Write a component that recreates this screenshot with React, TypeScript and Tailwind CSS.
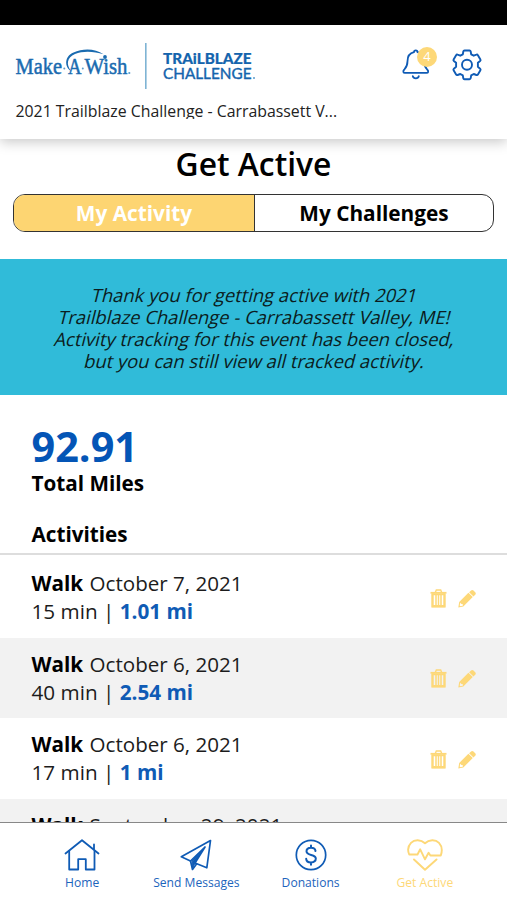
import type { ReactNode } from 'react'
import clsx from 'clsx'

interface Activity {
    type: string
    date: string
    minutes: number
    miles: string
}

const activities: Activity[] = [
    { type: 'Walk', date: 'October 7, 2021', minutes: 15, miles: '1.01 mi' },
    { type: 'Walk', date: 'October 6, 2021', minutes: 40, miles: '2.54 mi' },
    { type: 'Walk', date: 'October 6, 2021', minutes: 17, miles: '1 mi' },
    { type: 'Walk', date: 'September 29, 2021', minutes: 32, miles: '2.02 mi' },
]

const notice = [
    'Thank you for getting active with 2021',
    'Trailblaze Challenge - Carrabassett Valley, ME!',
    'Activity tracking for this event has been closed,',
    'but you can still view all tracked activity.',
]

function Logo() {
    return (
        <svg width="242" height="48" viewBox="0 0 242 48" className="block">
            <g fill="#1a6bb0" fontFamily="'Liberation Serif', serif" fontSize="22.5" stroke="#1a6bb0" strokeWidth=".5">
                <text x="0.500" y="32" textLength="46.500" lengthAdjust="spacingAndGlyphs">Make</text>
                <text x="53" y="32" textLength="13.500" lengthAdjust="spacingAndGlyphs">A</text>
                <text x="69.500" y="32" textLength="43" lengthAdjust="spacingAndGlyphs">Wish</text>
            </g>
            <circle cx="49.3" cy="26.5" r="1" fill="#5c9ccc" />
            <circle cx="67.8" cy="26.5" r="1" fill="#5c9ccc" />
            <circle cx="114.3" cy="31" r="1.100" fill="#5c9ccc" />
            {/* wish arc */}
            <path d="M56 29C49.500 25 49 14.500 58.500 10.500c9.500-4.300 22-4 30 1.800C79 9.300 68 8.800 60 12 51.800 15.500 51 22.500 56 29z" fill="#1a6bb0" />
            <circle cx="90" cy="15" r="1.900" fill="#1a6bb0" />
            <rect x="130" y="1" width="1.600" height="46" fill="#7fb4d4" />
            <g fill="#1464ad" stroke="#1464ad" fontFamily="Lato, sans-serif">
                <text x="148" y="22" fontSize="15.800" fontWeight="900" strokeWidth=".2" textLength="88.500" lengthAdjust="spacingAndGlyphs">TRAiLBLAZE</text>
                <text x="148" y="37" fontSize="16" strokeWidth=".4" textLength="88.500" lengthAdjust="spacingAndGlyphs">CHALLENGE</text>
            </g>
            <circle cx="239" cy="36" r="1" fill="#5c9ccc" />
        </svg>
    )
}

function BellIcon() {
    return (
        <svg width="28" height="32" viewBox="0 0 28 32" fill="none" stroke="#0f5bb5" strokeWidth="1.8" strokeLinecap="round" strokeLinejoin="round">
            <path d="M12 3.200C12 .8 15.500.8 15.500 3.200c4.500 1 6.500 4.500 6.500 9 0 5 1.500 6.500 3.300 8.500 1.500 1.800 1 3.100-.8 3.100H3c-1.800 0-2.300-1.300-.8-3.100 1.800-2 3.300-3.500 3.300-8.500 0-4.500 2-8 6.500-9z" />
            <path d="M10.800 27.200c.8 2.800 5.200 2.800 6 0" />
        </svg>
    )
}

function GearIcon() {
    return (
        <svg width="32" height="32" viewBox="0 0 32 32" fill="none" stroke="#0f5bb5" strokeWidth="1.900" strokeLinejoin="round">
            <path d="M13.500 1.500h5q1 0 1.200 1l.5 2.800 2.500 1.400 2.700-1q1-.4 1.500.5l2.500 4.200q.5.900-.3 1.600l-2.200 1.800v4l2.200 1.900q.8.700.3 1.600l-2.500 4.200q-.5.900-1.500.5l-2.700-1-2.500 1.400-.5 2.800q-.2 1-1.200 1h-5q-1 0-1.200-1l-.5-2.800-2.500-1.400-2.700 1q-1 .4-1.500-.5l-2.500-4.200q-.5-.9.3-1.600l2.200-1.900v-4l-2.200-1.800q-.8-.7-.3-1.600l2.500-4.200q.5-.9 1.500-.5l2.700 1 2.500-1.400.5-2.800q.2-1 1.200-1z" />
            <circle cx="16" cy="15.800" r="5" />
        </svg>
    )
}

function TrashIcon() {
    return (
        <svg width="17" height="19" viewBox="0 0 17 19" fill="none" stroke="#fdd878">
            <path d="M.5 3.800h16" strokeWidth="1.800" />
            <path d="M5.300 3.500 6.300 1h4.400l1 2.500" strokeWidth="1.400" />
            <path d="M2.500 4.500v12.800h12V4.500" strokeWidth="2.400" />
            <path d="M6 5v12M8.500 5v12M11 5v12" strokeWidth="1.500" />
            <path d="M2 17.300h13M2 5.200h13" strokeWidth="2" />
        </svg>
    )
}

function PencilIcon() {
    return (
        <svg width="18" height="19" viewBox="0 0 18 19" fill="#fdd878">
            <path d="M12.800 1.700c1-1 1.900-.9 2.700-.1l1.700 1.700c.8.8.8 1.700 0 2.500l-1.700 1.700-4.400-4.300z" />
            <path fillRule="evenodd" d="M10.400 3.800 14.800 8.100 5.300 17.500.3 18.500l.9-5.500zM2.300 13.800l-.6 2.600.9.800 2.400-.6-.2-1.400-1.400-.1z" />
        </svg>
    )
}

function HomeIcon() {
    return (
        <svg width="36" height="32" viewBox="0 0 36 32" fill="none" stroke="#0f5bb5" strokeWidth="1.800" strokeLinecap="round" strokeLinejoin="round">
            <path d="M1.500 14.500 18 1.200l16.500 13.300M30 10.500V5.500" />
            <path d="M5.200 12v18.500h9V20.200h7.600v10.300h8.700V12" />
        </svg>
    )
}

function PlaneIcon() {
    return (
        <svg width="32" height="32" viewBox="0 0 32 32" fill="none" stroke="#0f5bb5" strokeWidth="1.700" strokeLinecap="round" strokeLinejoin="round">
            <path d="M30.500 1.500 1.300 17.800l9.200 4.200L25 8 15 24l11.800 4.800z" />
            <path d="M10.500 22 12.500 30.500 16.500 25" />
            <path d="M12 22.500 12.700 29l2.300-5L21 13z" fill="#0f5bb5" strokeWidth="1" />
        </svg>
    )
}

function DollarIcon() {
    return (
        <svg width="32" height="32" viewBox="0 0 32 32" fill="none" stroke="#0f5bb5" strokeWidth="1.700" strokeLinecap="round">
            <circle cx="16" cy="16" r="14.700" />
            <path d="M20.500 12c-.3-2.200-2.200-3.200-4.500-3.200s-4.500 1.200-4.500 3.500c0 5 9.300 2.300 9.300 7.300 0 2.500-2.200 3.800-4.800 3.800s-4.600-1.200-4.800-3.600M16 6.500v2.300M16 23.500v2.300" strokeWidth="2" />
        </svg>
    )
}

function HeartPulseIcon() {
    return (
        <svg width="36" height="32" viewBox="0 0 36 32" fill="none" stroke="#fdd878" strokeWidth="1.900" strokeLinecap="round" strokeLinejoin="round">
            <path d="M18 4.200C14 .3 7.500.2 4 3.800 1 7 .5 11.500 2.200 15.500h8.300l2.700-5.200 4.800 10 3.600-6.500 1.800 2.700h10.400C35.500 11.500 35 7 32 3.800 28.500.2 22 .3 18 4.200z" />
            <path d="M7 20.500 18 30.800l11.500-10.300" />
        </svg>
    )
}

function NavItem({ icon, label, active }: { icon: ReactNode; label: string; active?: boolean }) {
    return (
        <button className={clsx('flex flex-1 flex-col items-center pt-4 whitespace-nowrap', active ? 'text-[#fdd878]' : 'text-[#1c64bc]')}>
            {icon}
            <span className="mt-[3px] text-[12.1px] leading-[17px]">{label}</span>
        </button>
    )
}

export default function App() {
    return (
        <div className="flex h-[900px] w-[507px] flex-col overflow-hidden bg-white font-['Open_Sans',sans-serif] text-black">
            <div className="h-[25px] shrink-0 bg-black" />

            {/* Header */}
            <header className="relative z-10 h-[114px] shrink-0 bg-white px-[15px] pt-[17px] shadow-[0_3px_12px_rgba(0,0,0,0.22)]">
                <div className="flex h-12 items-center justify-between pr-[9px]">
                    <Logo />
                    <div className="flex items-center gap-[23px] pb-[2px]">
                        <div className="relative left-[2px]">
                            <BellIcon />
                            <span className="absolute -top-[2px] left-[15px] flex size-5 items-center justify-center rounded-full bg-[#fdd878] text-[13px] text-white">4</span>
                        </div>
                        <GearIcon />
                    </div>
                </div>
                <p className="mt-[10px] h-[19px] overflow-hidden pl-[0.5px] text-[15.85px] leading-[22px] text-[#222]">2021 Trailblaze Challenge - Carrabassett V...</p>
            </header>

            <main className="min-h-0 flex-1 overflow-hidden">
                <h1 className="mt-[5px] text-center text-[31.8px] leading-[40px] font-semibold">Get Active</h1>

                <div className="mx-[13px] mt-[10px] flex h-[38px] overflow-hidden rounded-[12px] border border-[#333] text-[20.8px] font-bold">
                    <button className="flex w-[241px] items-center justify-center border-r border-[#333] bg-[#fdd572] pt-[2px] text-white">My Activity</button>
                    <button className="flex flex-1 items-center justify-center pt-[2px]">My Challenges</button>
                </div>

                {/* Slanted upright face, not the true italic */}
                <div className="mt-[27px] h-[136px] bg-[#30bbd9] pt-[24.5px] pl-[3px] text-center text-[18.4px] leading-[22px] text-[#0b1c20]">
                    {notice.map(line => (
                        <p key={line} className="-skew-x-[14deg] whitespace-nowrap">{line}</p>
                    ))}
                </div>

                <section className="px-[31.5px] pt-[27px] font-bold">
                    <div className="text-[41.4px] leading-[48px] text-[#0455b6]">92.91</div>
                    <div className="-mt-px text-[20.7px] leading-[28px]">Total Miles</div>
                    <h2 className="mt-[23px] text-[20.7px] leading-[28px]">Activities</h2>
                </section>

                <ul className="mt-[5px] border-t-2 border-[#ddd] pt-[2px] text-[20.7px] leading-[28px]">
                    {activities.map((a, i) => (
                        <li key={i} className={clsx('flex h-[80.5px] items-center justify-between pr-[31px] pl-[31.5px]', i % 2 === 1 && 'bg-[#f2f2f2]')}>
                            <div>
                                <div className="text-[#1c1c1c]"><b className="text-black">{a.type}</b> <span className="ml-px text-[20.6px]">{a.date}</span></div>
                                <div className="text-[#1c1c1c]">{a.minutes} min | <b className="text-[#0f5bb5]">{a.miles}</b></div>
                            </div>
                            <div className="flex gap-[11px] pt-[2px]">
                                <TrashIcon />
                                <PencilIcon />
                            </div>
                        </li>
                    ))}
                </ul>
            </main>

            {/* Bottom tabs */}
            <nav className="flex h-[78px] shrink-0 border-t border-[#888] bg-white px-[25px]">
                <NavItem icon={<HomeIcon />} label="Home" />
                <NavItem icon={<PlaneIcon />} label="Send Messages" />
                <NavItem icon={<DollarIcon />} label="Donations" />
                <NavItem icon={<HeartPulseIcon />} label="Get Active" active />
            </nav>
        </div>
    )
}
